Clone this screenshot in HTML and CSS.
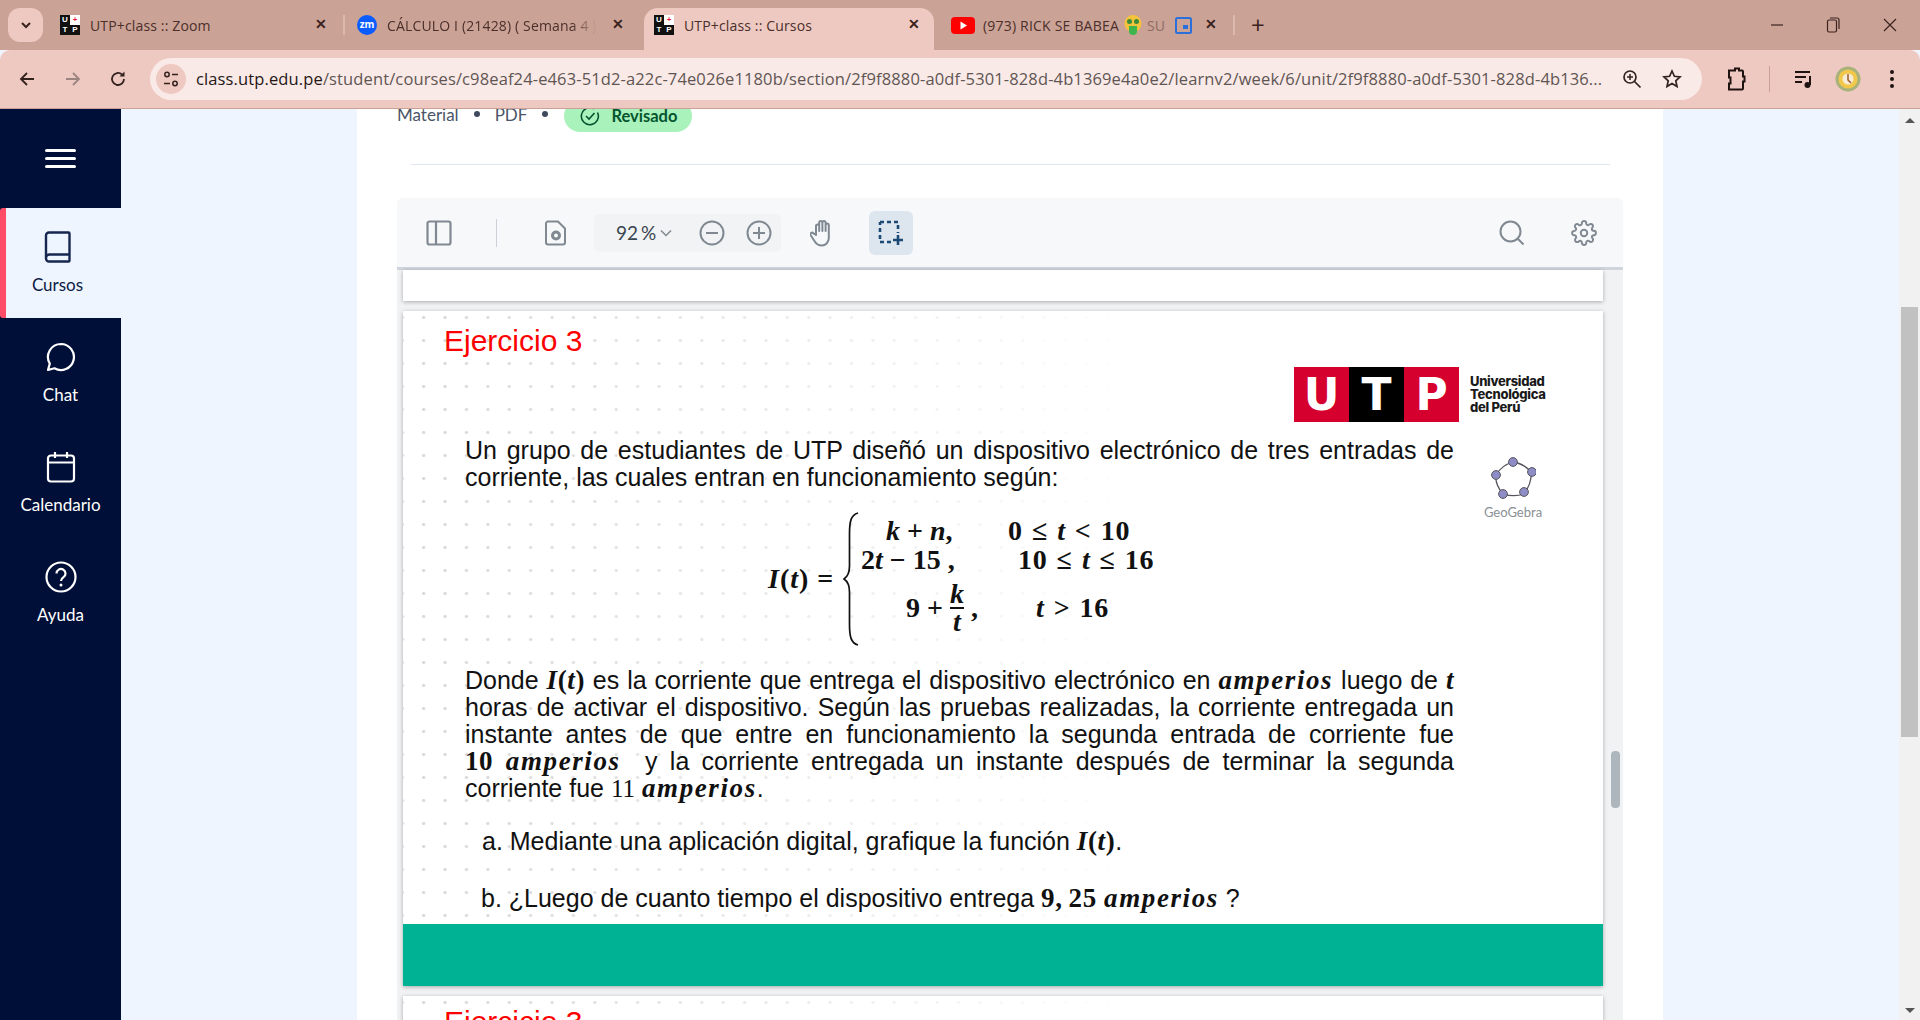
FILE: index.html
```html
<!DOCTYPE html>
<html lang="es">
<head>
    <meta charset="UTF-8">
    <meta name="viewport" content="width=device-width, initial-scale=1.0">
    <title>UTP+class :: Cursos</title>
    <link rel="stylesheet" href="styles.css">
</head>
<body>
    <!-- browser frame -->
    <div class="tabstrip">
        <button class="tab-search"><svg width="14" height="14" viewBox="0 0 14 14"><path d="M3 5l4 4 4-4" fill="none" stroke="#3b2320" stroke-width="2"/></svg></button>
        <div class="tab tab-first">
            <span class="fav"><b>U</b><b class="fav-plus">+</b><b>T</b><b>P</b></span>
            <span class="tab-title">UTP+class :: Zoom</span>
            <span class="tab-close">✕</span>
        </div>
        <div class="tab-sep"></div>
        <div class="tab tab-second">
            <span class="zm">zm</span>
            <span class="tab-title">CÁLCULO I (21428) ( Semana 4 )</span>
            <span class="tab-close">✕</span>
        </div>
        <div class="tab tab-active">
            <span class="fav"><b>U</b><b class="fav-plus">+</b><b>T</b><b>P</b></span>
            <span class="tab-title">UTP+class :: Cursos</span>
            <span class="tab-close">✕</span>
        </div>
        <div class="tab tab-last">
            <svg class="yt" width="24" height="17" viewBox="0 0 24 17"><rect width="24" height="17" rx="4" fill="#f00"/><path d="M9.5 4.5l6.5 4-6.5 4z" fill="#fff"/></svg>
            <span class="tab-title tab-title-yt">(973) RICK SE BABEA</span>
            <svg class="emoji" width="18" height="20" viewBox="0 0 18 20"><circle cx="9" cy="8.500" r="8.500" fill="#f5c33b"/><circle cx="5.500" cy="6.500" r="2.500" fill="#3c8a3a"/><circle cx="12.500" cy="6.500" r="2.500" fill="#3c8a3a"/><path d="M5 11h8v6c0 1.500-1.500 3-4 3s-4-1.500-4-3z" fill="#3db54a"/></svg>
            <span class="tab-title tab-title-su">SU</span>
            <svg class="cast" width="17" height="17" viewBox="0 0 17 17"><rect x="1" y="1" width="15" height="15" rx="1.5" fill="none" stroke="#2b6fdb" stroke-width="2"/><rect x="8" y="8" width="5" height="4" fill="#2b6fdb"/></svg>
            <span class="tab-close">✕</span>
        </div>
        <div class="tab-sep"></div>
        <span class="tab-new">+</span>
        <div class="win-controls">
            <svg width="14" height="14" viewBox="0 0 14 14"><path d="M1 7h12" stroke="#3b2320" stroke-width="1.2"/></svg>
            <svg width="14" height="18" viewBox="0 0 14 18"><rect x="1.5" y="4" width="9" height="12" rx="1.5" fill="none" stroke="#3b2320" stroke-width="1.2"/><path d="M4 2h7a2 2 0 0 1 2 2v9" fill="none" stroke="#3b2320" stroke-width="1.2"/></svg>
            <svg width="16" height="16" viewBox="0 0 16 16"><path d="M2 2l12 12M14 2L2 14" stroke="#3b2320" stroke-width="1.2"/></svg>
        </div>
    </div>

    <div class="toolbar">
        <div class="nav-buttons">
            <svg width="18" height="18" viewBox="0 0 18 18"><path d="M16 9H3M9 3L3 9l6 6" fill="none" stroke="#33211e" stroke-width="1.8"/></svg>
            <svg width="18" height="18" viewBox="0 0 18 18"><path d="M2 9h13M9 3l6 6-6 6" fill="none" stroke="#9a8581" stroke-width="1.8"/></svg>
            <svg width="18" height="18" viewBox="0 0 18 18"><path d="M15 9a6 6 0 1 1-2-4.5" fill="none" stroke="#33211e" stroke-width="1.8"/><path d="M15.5 1.5v5h-5z" fill="#33211e"/></svg>
        </div>
        <div class="omnibox">
            <span class="site-controls"><svg width="16" height="18" viewBox="0 0 16 18"><circle cx="4" cy="4.500" r="2.200" fill="none" stroke="#33211e" stroke-width="1.500"/><path d="M9 4.500h6M1 13.500h6" stroke="#33211e" stroke-width="1.500"/><circle cx="12" cy="13.500" r="2.200" fill="none" stroke="#33211e" stroke-width="1.500"/></svg></span>
            <span class="url"><span class="url-host">class.utp.edu.pe</span>/student/courses/c98eaf24-e463-51d2-a22c-74e026e1180b/section/2f9f8880-a0df-5301-828d-4b1369e4a0e2/learnv2/week/6/unit/2f9f8880-a0df-5301-828d-4b136...</span>
            <svg class="omni-zoom" width="20" height="20" viewBox="0 0 20 20"><circle cx="8" cy="8" r="6" fill="none" stroke="#33211e" stroke-width="1.700"/><path d="M12.500 12.500l6 6" stroke="#33211e" stroke-width="1.700"/><path d="M5 8h6M8 5v6" stroke="#33211e" stroke-width="1.500"/></svg>
            <svg class="omni-star" width="20" height="20" viewBox="0 0 20 20"><path d="M10 2l2.400 5.300 5.600.6-4.200 3.900 1.200 5.700-5-2.900-5 2.900 1.200-5.700L2 7.900l5.600-.6z" fill="none" stroke="#33211e" stroke-width="1.700"/></svg>
        </div>
        <div class="toolbar-actions">
            <svg class="act-ext" width="20" height="24" viewBox="0 0 20 24"><path d="M3 3.500h6V1.500h4v2h3a1 1 0 0 1 1 1v5h1.500v5H17v7a1 1 0 0 1-1 1H3v-6h1.500v-6H3z" fill="none" stroke="#1f1311" stroke-width="2"/></svg>
            <span class="act-sep"></span>
            <svg class="act-media" width="20" height="20" viewBox="0 0 20 20"><path d="M1 3h15M1 8h11M1 13h7" stroke="#1f1311" stroke-width="2"/><path d="M16 7v9" stroke="#1f1311" stroke-width="2"/><circle cx="13.500" cy="16" r="3" fill="#1f1311"/></svg>
            <svg class="act-avatar" width="26" height="26" viewBox="0 0 26 26"><circle cx="13" cy="13" r="12.500" fill="#a9b27a"/><circle cx="13" cy="13" r="9.500" fill="#f2c84b"/><circle cx="13" cy="13" r="5.500" fill="#f7ecd6"/><path d="M13 8v6l3 3" fill="none" stroke="#9c5a2a" stroke-width="1.500"/></svg>
            <svg class="act-menu" width="6" height="20" viewBox="0 0 6 20"><circle cx="3" cy="3" r="2" fill="#1f1311"/><circle cx="3" cy="10" r="2" fill="#1f1311"/><circle cx="3" cy="17" r="2" fill="#1f1311"/></svg>
        </div>
    </div>

    <div class="app">
        <!-- side nav -->
        <nav class="sidebar">
            <div class="burger"><span></span><span></span><span></span></div>
            <a class="nav-item nav-active">
                <svg width="28" height="32" viewBox="0 0 28 32"><path d="M5 1.500h19.500a1 1 0 0 1 1 1v27a1 1 0 0 1-1 1H5a3 3 0 0 1-3-3V4.500a3 3 0 0 1 3-3z M2 27a3.500 3.500 0 0 1 3.500-3.500h20" fill="none" stroke="#16264f" stroke-width="2.400"/></svg>
                <span>Cursos</span>
            </a>
            <a class="nav-item">
                <svg width="30" height="30" viewBox="0 0 30 30"><path d="M15 2a13 13 0 1 1-6.500 24.300L2 28l1.800-6.400A13 13 0 0 1 15 2z" fill="none" stroke="#fff" stroke-width="2.200" stroke-linejoin="round"/></svg>
                <span>Chat</span>
            </a>
            <a class="nav-item">
                <svg width="30" height="32" viewBox="0 0 30 32"><rect x="2" y="4.500" width="26" height="26" rx="3" fill="none" stroke="#fff" stroke-width="2.200"/><path d="M2 11.500h26M9 1v6M21 1v6" stroke="#fff" stroke-width="2.200"/></svg>
                <span>Calendario</span>
            </a>
            <a class="nav-item">
                <svg width="32" height="32" viewBox="0 0 32 32"><circle cx="16" cy="16" r="14.500" fill="none" stroke="#fff" stroke-width="2.200"/><path d="M11.500 12.500a4.500 4.500 0 1 1 7 3.700c-1.500 1-2.500 1.800-2.500 3.800" fill="none" stroke="#fff" stroke-width="2.200"/><circle cx="16" cy="24" r="1.500" fill="#fff"/></svg>
                <span>Ayuda</span>
            </a>
        </nav>

        <main class="content">
            <div class="card">
                <div class="meta">
                    <span>Material</span>
                    <span class="meta-dot"></span>
                    <span>PDF</span>
                    <span class="meta-dot"></span>
                    <span class="pill">
                        <svg width="20" height="20" viewBox="0 0 20 20"><path d="M17.500 6.500A8.500 8.500 0 1 1 14 2.800" fill="none" stroke="#04552f" stroke-width="1.600"/><path d="M6 10l3 3 5.500-6" fill="none" stroke="#04552f" stroke-width="1.600"/></svg>
                        Revisado
                    </span>
                </div>
                <div class="divider"></div>

                <div class="viewer">
                    <div class="viewer-bar">
                        <svg class="ic-panel" width="26" height="26" viewBox="0 0 26 26"><rect x="1.500" y="1.500" width="23" height="23" rx="2" fill="none" stroke="#808992" stroke-width="2.200"/><path d="M10 1.500v23" stroke="#808992" stroke-width="2.200"/></svg>
                        <span class="bar-sep"></span>
                        <svg class="ic-doc" width="22" height="26" viewBox="0 0 22 26"><path d="M3 1.500h10l7 7v14a2 2 0 0 1-2 2H3a2 2 0 0 1-2-2v-19a2 2 0 0 1 2-2z" fill="none" stroke="#808992" stroke-width="2"/><circle cx="11" cy="15.500" r="3.500" fill="none" stroke="#808992" stroke-width="3"/></svg>
                        <div class="zoom-group">
                            <span class="zoom-value">92 %</span>
                            <svg class="ic-chevron" width="12" height="8" viewBox="0 0 12 8"><path d="M1 1.500l5 5 5-5" fill="none" stroke="#808992" stroke-width="1.500"/></svg>
                            <svg class="ic-minus" width="26" height="26" viewBox="0 0 26 26"><circle cx="13" cy="13" r="11.500" fill="none" stroke="#808992" stroke-width="2"/><path d="M7 13h12" stroke="#808992" stroke-width="2"/></svg>
                            <svg class="ic-plus" width="26" height="26" viewBox="0 0 26 26"><circle cx="13" cy="13" r="11.500" fill="none" stroke="#808992" stroke-width="2"/><path d="M7 13h12M13 7v12" stroke="#808992" stroke-width="2"/></svg>
                        </div>
                        <svg class="ic-hand" width="26" height="28" viewBox="0 0 26 28"><path d="M6 16V7a1.600 1.600 0 0 1 3.200 0v5V3.500a1.600 1.600 0 0 1 3.200 0V12V3.500a1.600 1.600 0 0 1 3.200 0V12V6a1.600 1.600 0 0 1 3.200 0v13c0 4-3 7.500-7 7.500-3.500 0-5.500-1.500-7-4l-4-6a1.700 1.700 0 0 1 2.600-2.200z" fill="none" stroke="#808992" stroke-width="2" stroke-linejoin="round"/></svg>
                        <span class="select-btn"><svg width="26" height="26" viewBox="0 0 26 26"><path d="M2 2h18v11M13 22H2V2" fill="none" stroke="#1d4a75" stroke-width="2.600" stroke-dasharray="4 3"/><path d="M20 15v10M15 20h10" stroke="#1d4a75" stroke-width="2.600"/></svg></span>
                        <svg class="ic-search" width="26" height="26" viewBox="0 0 26 26"><circle cx="11.500" cy="11.500" r="10" fill="none" stroke="#808992" stroke-width="2"/><path d="M18.500 18.500l6 6" stroke="#808992" stroke-width="2"/></svg>
                        <svg class="ic-gear" width="26" height="26" viewBox="0 0 24 24" fill="none" stroke="#808992" stroke-width="1.800"><circle cx="12" cy="12" r="3"/><path d="M19.400 15a1.650 1.650 0 0 0 .33 1.820l.06.06a2 2 0 0 1 0 2.830 2 2 0 0 1-2.830 0l-.06-.06a1.650 1.650 0 0 0-1.820-.33 1.650 1.650 0 0 0-1 1.510V21a2 2 0 0 1-2 2 2 2 0 0 1-2-2v-.09A1.650 1.650 0 0 0 9 19.400a1.650 1.650 0 0 0-1.820.33l-.06.06a2 2 0 0 1-2.830 0 2 2 0 0 1 0-2.830l.06-.06a1.650 1.650 0 0 0 .33-1.820 1.650 1.650 0 0 0-1.510-1H3a2 2 0 0 1-2-2 2 2 0 0 1 2-2h.09A1.650 1.650 0 0 0 4.600 9a1.650 1.650 0 0 0-.33-1.820l-.06-.06a2 2 0 0 1 0-2.830 2 2 0 0 1 2.830 0l.06.06a1.650 1.650 0 0 0 1.820.33H9a1.650 1.650 0 0 0 1-1.510V3a2 2 0 0 1 2-2 2 2 0 0 1 2 2v.09a1.650 1.650 0 0 0 1 1.510 1.650 1.650 0 0 0 1.820-.33l.06-.06a2 2 0 0 1 2.830 0 2 2 0 0 1 0 2.830l-.06.06a1.650 1.650 0 0 0-.33 1.820V9a1.650 1.650 0 0 0 1.510 1H21a2 2 0 0 1 2 2 2 2 0 0 1-2 2h-.09a1.650 1.650 0 0 0-1.510 1z"/></svg>
                    </div>

                    <div class="pages">
                        <div class="page page-stub"></div>

                        <div class="page page-main">
                            <h2 class="ej-title">Ejercicio 3</h2>

                            <div class="logo-utp">
                                <div class="utp-blocks"><b>U</b><b class="utp-black">T</b><b>P</b></div>
                                <div class="utp-name">Universidad<br>Tecnológica<br>del Perú</div>
                            </div>
                            <div class="logo-geo">
                                <svg width="46" height="44" viewBox="0 0 46 44"><path d="M23 5C30 6 36 9 41 15 42 23 39 30 34 37 28 39 20 39 13 37 8 31 5 25 6 18 10 11 16 7 23 5z" fill="none" stroke="#55555e" stroke-width="1.300"/><g fill="#8f8dc6" stroke="#55555e" stroke-width="1"><circle cx="23" cy="5" r="4.400"/><circle cx="42" cy="15" r="4.400"/><circle cx="34" cy="35" r="4.400"/><circle cx="13" cy="37" r="4.400"/><circle cx="6" cy="18" r="4.400"/></g></svg>
                                <span>GeoGebra</span>
                            </div>

                            <p class="para para-intro">
                                <span class="ln">Un grupo de estudiantes de UTP diseñó un dispositivo electrónico de tres entradas de</span>
                                <span class="ln ln-end">corriente, las cuales entran en funcionamiento según:</span>
                            </p>

                            <div class="formula">
                                <div class="f-label"><i>I</i>(<i>t</i>) =</div>
                                <svg class="brace" width="16" height="134" viewBox="0 0 16 134"><path d="M15 1C8 3 6.500 9 6.500 22V54C6.500 61 4 65 1 67 4 69 6.500 73 6.500 80V112C6.500 125 8 131 15 133" fill="none" stroke="#111" stroke-width="1.700"/></svg>
                                <div class="cases">
                                    <div class="c1 c1-a"><i>k</i> + <i>n</i>,</div>
                                    <div class="c2 c2-a">0 ≤ <i>t</i> &lt; 10</div>
                                    <div class="c1 c1-b">2<i>t</i> − 15 ,</div>
                                    <div class="c2 c2-b">10 ≤ <i>t</i> ≤ 16</div>
                                    <div class="c1 c1-c">9 + <span class="frac"><i>k</i><i class="frac-den">t</i></span> ,</div>
                                    <div class="c2 c2-c"><i>t</i> &gt; 16</div>
                                </div>
                            </div>

                            <p class="para para-body">
                                <span class="ln">Donde <b class="m"><i>I</i>(<i>t</i>)</b> es la corriente que entrega el dispositivo electrónico en <b class="m amp"><i>amperios</i></b> luego de <b class="m"><i>t</i></b></span>
                                <span class="ln">horas de activar el dispositivo. Según las pruebas realizadas, la corriente entregada un</span>
                                <span class="ln">instante antes de que entre en funcionamiento la segunda entrada de corriente fue</span>
                                <span class="ln"><b class="m">10 <i class="amp">amperios</i></b> &nbsp;y la corriente entregada un instante después de terminar la segunda</span>
                                <span class="ln ln-end">corriente fue <span class="m-plain">11</span> <b class="m amp"><i>amperios</i></b>.</span>
                            </p>

                            <p class="para item item-a">a. Mediante una aplicación digital, grafique la función <b class="m"><i>I</i>(<i>t</i>)</b>.</p>
                            <p class="para item item-b">b. ¿Luego de cuanto tiempo el dispositivo entrega <b class="m">9,&#8201;25 <i class="amp">amperios</i></b> ?</p>

                            <div class="band"></div>
                        </div>

                        <div class="page page-next">
                            <h2 class="ej-title">Ejercicio 3</h2>
                        </div>
                    </div>
                    <div class="viewer-thumb"></div>
                </div>
            </div>
        </main>

        <div class="scrollbar">
            <span class="sb-up"></span>
            <div class="sb-track"><div class="sb-thumb"></div></div>
            <span class="sb-down"></span>
        </div>
    </div>
</body>
</html>
```

FILE: styles.css
```css
* {
    box-sizing: border-box;
}

html, body {
    margin: 0;
    height: 100%;
    overflow: hidden;
}

body {
    display: flex;
    flex-direction: column;
    font-family: Lato, Arial, sans-serif;
    background: #eef5fe;
}

/* browser frame */
.tabstrip {
    display: flex;
    align-items: flex-end;
    height: 50px;
    background: #cba296;
    font-family: "Open Sans", sans-serif;
    font-size: 14px;
    color: #3b2320;
    flex: none;
}

.tab-search {
    width: 35px;
    height: 34px;
    margin: 0 7px 8px 8px;
    padding: 0;
    border: none;
    border-radius: 12px;
    background: #eec9c1;
    display: flex;
    align-items: center;
    justify-content: center;
}

.tab {
    height: 42px;
    padding-bottom: 8px;
    display: flex;
    align-items: center;
    position: relative;
    white-space: nowrap;
    overflow: hidden;
}

.tab-first { width: 294px; padding-left: 10px; }
.tab-second { width: 300px; padding-left: 13px; }
.tab-active { width: 290px; padding-left: 10px; background: #eec9c1; border-radius: 14px 14px 0 0; }
.tab-last { width: 300px; padding-left: 17px; }

.tab-sep {
    width: 2px;
    height: 20px;
    margin-bottom: 15px;
    margin-left: -1px;
    margin-right: -1px;
    background: #dcb9af;
}

.tab-title {
    margin-left: 10px;
    letter-spacing: 0.15px;
    overflow: hidden;
    color: #4a2f2a;
}

.tab-second .tab-title {
    width: 210px;
    -webkit-mask-image: linear-gradient(to right, #000 88%, transparent);
    mask-image: linear-gradient(to right, #000 88%, transparent);
}

.tab-title-yt { margin-left: 8px; letter-spacing: 0.2px; }
.tab-title-su { margin-left: 5px; color: #8d6c63; }
.emoji { margin-left: 5px; }
.cast { margin-left: 10px; }

.tab-close {
    position: absolute;
    left: 265px;
    font-size: 14px;
    font-weight: 700;
    top: 6px;
}

.tab-second .tab-close { left: 268px; }
.tab-active .tab-close { left: 264px; }
.tab-last .tab-close { left: 271px; }

.fav {
    width: 20px;
    height: 20px;
    display: grid;
    grid-template-columns: 1fr 1fr;
    background: #111;
    font-family: "Liberation Sans", sans-serif;
    font-size: 8px;
    line-height: 10px;
    color: #fff;
    text-align: center;
    flex: none;
}

.fav-plus {
    background: #fff;
    color: #e2203c;
}

.zm {
    width: 20px;
    height: 20px;
    border-radius: 50%;
    background: #0b5cff;
    color: #fff;
    font-size: 10px;
    font-weight: 700;
    line-height: 19px;
    text-align: center;
    flex: none;
}

.tab-new {
    margin: 0 0 11px 17px;
    font-size: 24px;
    line-height: 28px;
    font-weight: 400;
}

.win-controls {
    margin-left: auto;
    height: 100%;
    padding-right: 22px;
    display: flex;
    align-items: center;
    gap: 42px;
}

.toolbar {
    height: 59px;
    flex: none;
    display: flex;
    align-items: center;
    background: #eec9c1;
    border-bottom: 1px solid #c9a197;
    border-radius: 10px 10px 0 0;
    padding-bottom: 1px;
}

.nav-buttons {
    width: 150px;
    padding: 0 23px 0 18px;
    display: flex;
    justify-content: space-between;
}

.omnibox {
    width: 1552px;
    height: 42px;
    flex: none;
    border-radius: 21px;
    background: #f9e9e7;
    display: flex;
    align-items: center;
    padding-left: 6px;
}

.site-controls {
    width: 30px;
    height: 30px;
    flex: none;
    border-radius: 50%;
    background: #eec9c1;
    display: flex;
    align-items: center;
    justify-content: center;
}

.url {
    margin-left: 10px;
    width: 1426px;
    flex: none;
    font-family: "Open Sans", sans-serif;
    font-size: 16.5px;
    letter-spacing: 0.125px;
    color: #5f5653;
    white-space: nowrap;
    overflow: hidden;
}

.url-host {
    color: #241714;
}

.omni-star {
    margin-left: 20px;
}

.toolbar-actions {
    flex: 1;
    display: flex;
    align-items: center;
    padding-left: 24px;
}

.act-sep {
    width: 1px;
    height: 26px;
    margin: 0 24px 0 23px;
    background: #c9a197;
}

.act-avatar { margin-left: 21px; }
.act-menu { margin-left: 28px; }

/* app layout */
.app {
    flex: 1;
    min-height: 0;
    display: flex;
}

.sidebar {
    width: 121px;
    flex: none;
    background: #000f37;
    color: #fff;
    font-size: 17px;
}

.burger {
    height: 99px;
    padding-top: 40px;
    padding-left: 45px;
}

.burger span {
    display: block;
    width: 31px;
    height: 3px;
    margin-bottom: 5px;
    border-radius: 2px;
    background: #fff;
}

.nav-item {
    height: 110px;
    display: flex;
    flex-direction: column;
    align-items: center;
    padding-top: 23px;
    gap: 11px;
}

.nav-item svg {
    height: 32px;
    flex: none;
}

.nav-active {
    background: #eef5fe;
    color: #0c1a45;
    border-left: 6px solid #ff4d68;
    border-radius: 3px 0 0 3px;
    padding-right: 12px;
}

.content {
    flex: 1;
    min-width: 0;
    overflow: hidden;
    padding-left: 236px;
}

.card {
    width: 1306px;
    height: 100%;
    background: #fff;
    padding-left: 40px;
    overflow: hidden;
}

.meta {
    height: 22px;
    margin-top: -6px;
    display: flex;
    align-items: center;
    gap: 15px;
    font-size: 17px;
    color: #4a5568;
}

.meta-dot {
    width: 6px;
    height: 6px;
    border-radius: 50%;
    background: #3f4a5f;
}

.pill {
    height: 32px;
    padding: 0 15px 0 16px;
    border-radius: 16px;
    background: #aaf2bb;
    color: #04552f;
    font-weight: 700;
    font-size: 16.5px;
    display: flex;
    align-items: center;
    gap: 11px;
    margin-left: 1px;
    flex: none;
    align-self: flex-start;
    margin-top: -3px;
}

.divider {
    height: 1px;
    margin: 39px 53px 0 14px;
    background: #dfe6f0;
}

/* pdf viewer */
.viewer {
    position: relative;
    width: 1226px;
    margin-top: 33px;
    height: 822px;
    background: #f1f2f4;
    border-radius: 6px 6px 0 0;
    overflow: hidden;
}

.viewer-bar {
    height: 72px;
    display: flex;
    align-items: center;
    background: #f7f8fa;
    border-bottom: 3px solid #d0d4dc;
    padding-left: 29px;
}

.bar-sep {
    width: 1px;
    height: 28px;
    margin: 0 48px 0 44px;
    background: #ccd0d6;
}

.ic-doc { flex: none; }

.zoom-group {
    width: 187px;
    height: 38px;
    margin-left: 27px;
    border-radius: 6px;
    background: #f1f3f5;
    display: flex;
    align-items: center;
    padding-left: 22px;
}

.zoom-value {
    font-size: 19px;
    word-spacing: -2px;
    color: #3a4550;
    width: 44px;
    white-space: nowrap;
}

.ic-minus { margin-left: 27px; }
.ic-plus { margin-left: 21px; }
.ic-hand { margin-left: 29px; }

.select-btn {
    width: 44px;
    height: 44px;
    margin-left: 33px;
    border-radius: 6px;
    background: #dde5ee;
    display: flex;
    align-items: center;
    justify-content: center;
}

.ic-search { margin-left: auto; }
.ic-gear { margin: 0 26px 0 46px; }

.pages {
    padding: 0 20px 0 6px;
    display: flex;
    flex-direction: column;
    gap: 10px;
}

.page {
    background: #fff;
    box-shadow: 0 1px 4px rgba(0, 0, 0, 0.3);
    font-family: "Liberation Sans", Arial, sans-serif;
    color: #111;
    flex: none;
}

.page-stub {
    height: 31px;
}

.page-main {
    position: relative;
    height: 675px;
    display: flex;
    flex-direction: column;
    background:
        linear-gradient(to right, rgba(255, 255, 255, 0.25), #fff 62%),
        radial-gradient(circle, #cacaca 1.3px, transparent 1.9px) 10px -5px / 21.4px 23px,
        #fff;
}

.page-next {
    height: 60px;
    background:
        linear-gradient(to right, rgba(255, 255, 255, 0.25), #fff 62%),
        radial-gradient(circle, #cacaca 1.3px, transparent 1.9px) 10px -5px / 21.4px 23px,
        #fff;
}

.page-next .ej-title {
    margin-top: 10px;
}

.ej-title {
    margin: 14px 0 0 41px;
    font-size: 30px;
    line-height: 32px;
    font-weight: 400;
    color: #f00;
}

.para {
    margin: 0;
    font-size: 25px;
    line-height: 27px;
    color: #111;
}

.ln {
    display: block;
    text-align: justify;
    text-align-last: justify;
}

.ln-end {
    text-align-last: left;
}

.para-intro {
    width: 989px;
    margin: 80px 0 0 62px;
}

.para-body {
    width: 989px;
    margin: 20px 0 0 62px;
}

.item {
    margin-left: 79px;
    white-space: nowrap;
}

.item-a { margin-top: 26px; }
.item-b { margin-top: 30px; margin-left: 78px; }

.m, .f-label, .cases {
    font-family: "Liberation Serif", serif;
    font-weight: 700;
    font-style: normal;
}

.m {
    font-size: 27px;
    letter-spacing: 0.6px;
}

.amp {
    letter-spacing: 1.6px;
}

.m-plain {
    font-family: "Liberation Serif", serif;
    font-size: 25px;
}

.band {
    height: 62px;
    margin-top: auto;
    background: #00b294;
}

/* formula */
.formula {
    display: flex;
    align-items: center;
    height: 136px;
    margin: 20px 0 0 365px;
    font-size: 28px;
}

.f-label {
    width: 75px;
    white-space: nowrap;
    letter-spacing: 1px;
}

.brace {
    flex: none;
}

.cases {
    display: grid;
    grid-template-columns: 149px 170px;
    grid-template-rows: 38px 20px 76px;
    align-items: center;
    white-space: nowrap;
}

.c2 {
    letter-spacing: 0.7px;
    word-spacing: 1.5px;
}

.c1-a { padding-left: 27px; }
.c1-b { padding-left: 2px; }
.c1-c { padding-left: 47px; display: flex; align-items: center; gap: 7px; }
.c2-b { padding-left: 10px; }
.c2-c { padding-left: 28px; }

.frac {
    display: inline-flex;
    flex-direction: column;
    align-items: center;
    line-height: 26px;
}

.frac-den {
    border-top: 2px solid #111;
    padding: 0 3px;
}

/* page logos */
.logo-utp {
    position: absolute;
    left: 891px;
    top: 56px;
    display: flex;
    align-items: center;
    gap: 11px;
}

.utp-blocks {
    display: flex;
    height: 55px;
}

.utp-blocks b {
    width: 55px;
    font-family: "DejaVu Sans", sans-serif;
    font-weight: 700;
    font-size: 44px;
    line-height: 55px;
    text-align: center;
    color: #fff;
    background: #d5002d;
}

.utp-blocks .utp-black {
    background: #000;
}

.utp-name {
    font-family: Inter, sans-serif;
    font-size: 13px;
    line-height: 13px;
    font-weight: 800;
    letter-spacing: -0.3px;
    color: #1a1a1a;
}

.logo-geo {
    position: absolute;
    left: 1079px;
    top: 146px;
    width: 62px;
    display: flex;
    flex-direction: column;
    align-items: center;
    gap: 4px;
    font-family: Lato, sans-serif;
    font-size: 13px;
    line-height: 14px;
    color: #8a8f94;
}

/* scrollbars */
.viewer-thumb {
    position: absolute;
    right: 3px;
    top: 553px;
    width: 9px;
    height: 57px;
    border-radius: 4px;
    background: #aeb6bd;
}

.scrollbar {
    width: 21px;
    flex: none;
    background: #f1f1f1;
    display: flex;
    flex-direction: column;
    align-items: center;
}

.sb-up, .sb-down {
    width: 0;
    height: 0;
    flex: none;
    border-left: 5px solid transparent;
    border-right: 5px solid transparent;
}

.sb-up {
    margin-top: 9px;
    border-bottom: 5px solid #555;
}

.sb-down {
    margin-bottom: 7px;
    border-top: 5px solid #555;
}

.sb-track {
    flex: 1;
    width: 100%;
    padding: 184px 2px 0;
}

.sb-thumb {
    height: 430px;
    background: #c1c1c1;
}
```
